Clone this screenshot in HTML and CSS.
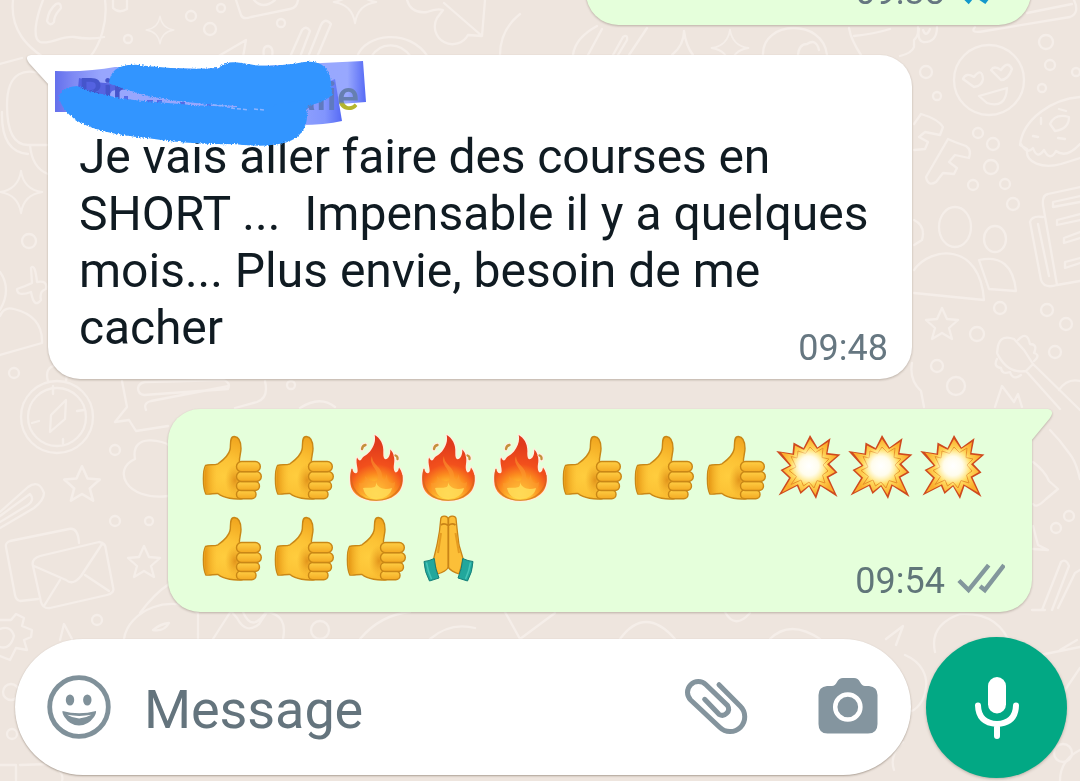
FILE: index.html
```html
<!DOCTYPE html>
<html lang="fr">
<head>
<meta charset="utf-8">
<title>Discussion</title>
<link rel="stylesheet" href="styles.css">
</head>
<body>
<svg class="defs" width="0" height="0" aria-hidden="true">
  <defs>
    <radialGradient id="skin" gradientUnits="userSpaceOnUse" cx="27" cy="44" r="40">
      <stop offset="0" stop-color="#ffcd3e"/><stop offset=".45" stop-color="#fcc235"/><stop offset="1" stop-color="#f0a51e"/>
    </radialGradient>
    <linearGradient id="wrist" x1="0" y1="0" x2="1" y2="0">
      <stop offset="0" stop-color="#e39312"/><stop offset="1" stop-color="#f8b92d" stop-opacity="0"/>
    </linearGradient>
    <linearGradient id="finger" x1="0" y1="0" x2="0" y2="1">
      <stop offset="0" stop-color="#ffcf45"/><stop offset="1" stop-color="#f3a922"/>
    </linearGradient>
    <radialGradient id="palm"><stop offset="0" stop-color="#d98412" stop-opacity=".75"/><stop offset="1" stop-color="#e89a1c" stop-opacity="0"/></radialGradient>
    <radialGradient id="fire" gradientUnits="userSpaceOnUse" cx="35" cy="62" r="50">
      <stop offset="0" stop-color="#ffe95c"/><stop offset=".2" stop-color="#ffc433"/><stop offset=".4" stop-color="#fb8a1e"/><stop offset=".6" stop-color="#f2501c"/><stop offset="1" stop-color="#e03a1c"/>
    </radialGradient>
    <radialGradient id="boom" gradientUnits="userSpaceOnUse" cx="36" cy="35" r="28">
      <stop offset="0" stop-color="#fff"/><stop offset=".25" stop-color="#fffbe0"/><stop offset=".6" stop-color="#ffdc60"/><stop offset="1" stop-color="#fbae2c"/>
    </radialGradient>
    <radialGradient id="glow"><stop offset="0" stop-color="#fff"/><stop offset=".5" stop-color="#fffdf0" stop-opacity=".9"/><stop offset="1" stop-color="#fff3a8" stop-opacity="0"/></radialGradient>
    <symbol id="thumb" viewBox="0 0 72 72">
      <g stroke="#c98716" stroke-width="1.4" stroke-linejoin="round">
        <path fill="url(#skin)" d="M8.500 33.500C12 32 17 33.500 21 31.800C25 29 32 23 33.200 17C33.800 12 32.500 4.600 37.300 4.500C42 5 44 10 44 16.500C44 22 42 25 42.500 30L48 40L45 66.800C38 67.500 27 66.500 21 61.500C17 61 13 62.800 8.800 62C5.500 55 5.800 38 8.500 33.500Z"/>
        <path fill="url(#wrist)" stroke="none" d="M9 34.300L20 33L20 61L9.300 61.300C6.500 54 7 39 9 34.300Z"/>
        <ellipse cx="38" cy="48" rx="10" ry="16" fill="url(#palm)" stroke="none"/>
        <g fill="url(#finger)">
          <rect x="39.500" y="58" width="19.500" height="8.800" rx="4.200"/>
          <rect x="39.500" y="49.500" width="23" height="9" rx="4.400"/>
          <rect x="39.500" y="39.500" width="24.800" height="10" rx="5"/>
          <rect x="39.500" y="29.500" width="23.800" height="10.300" rx="5"/>
        </g>
      </g>
    </symbol>
    <symbol id="flame" viewBox="0 0 72 72">
      <path fill="url(#fire)" stroke="#ffeede" stroke-width="2.500" stroke-linejoin="round" paint-order="stroke" d="M33.700 3C39 6 43 12 42.300 21C42.200 25 43 27 44.500 27.300C48 27 49.500 22 49.300 17.500C53 21 54 27 53 32C52.300 36 53 40 55 40.500C57 40 57.500 38 58 35.500C61 39 62 44 61.700 49C61 61 51 68.700 35.300 68.700C20 68.700 9.500 61 9.300 49.700C9 43 9.500 40 11 36.300C12 40 13 41.500 15.200 41.300C19 40 14 32 16 25.500C17.500 28 18.500 29 20 28C22 24 25.500 23.500 29 19.500C33 14 35 9 33.700 3Z"/>
      <path fill="none" stroke="#c9661c" stroke-opacity=".6" stroke-width="1.300" d="M11 37C7 58 19 68.300 35.300 68.300C51 68.300 62 58 61 43"/>
      <path fill="#fb9a30" opacity=".55" d="M31 24C27 33 37 36 37 46C36 51 29 50 24 44C25 49 24 52 18 51C18 60 24 66 35 66C48 66 54 59 54 50C50 53 46 50 46 42C44 48 43 49 41 45C42 35 31 33 31 24Z"/>
      <path fill="#ffe760" opacity=".7" d="M35 50C36 58 29 55 22 56C24 64 28 66.500 35 66.500C45 66.500 50 62 51 56C44 58 37 57 35 50Z"/>
      <path d="M21 17.500Q21 13.500 24.500 12.800M55 23.500Q57.500 24.500 56.500 27.500" fill="none" stroke="#ffeede" stroke-width="4.500" stroke-linecap="round"/>
      <path d="M21 17Q21.500 13.500 24.500 13M54.500 23.500Q57 24.500 56.500 27" fill="none" stroke="#c4913a" stroke-width="2.300" stroke-linecap="round"/>
    </symbol>
    <symbol id="burst" viewBox="0 0 72 72">
      <path fill="#cf4a1e" d="M3.200 19L19.500 21.500L20.500 10.500L30.500 16L37 3L44.500 15.500L57.500 6L54.500 21L67.500 22.500L56.500 32L64.500 40.500L55.500 45.500L64.500 65L47.500 54L43 67L36 54.500L27.500 62L24 54L5.500 63.500L16 46L7.500 38L16.500 33.500Z"/>
      <path fill="url(#boom)" d="M8 20.500L21 23L22 13.500L31 18L37 7L44 17L55 10L53 22.500L64 23.800L54 32.200L62 40L53.500 44.800L61 60.500L46.500 52.200L42.500 63L36.200 53L28 59.500L25 52.200L9 60.500L18 45.800L10 38.200L18.500 33.800Z"/>
      <path fill="none" stroke="#e8912a" stroke-width="1" d="M18 24.500L24 26L25 19L32.500 21.500L37 15L42.500 20.500L50 16L49 25.500L56 27L50 33L55 39L49.500 43L52 51L44 48.500L41 56L36 50L30.500 54L28 48L18 52.500L23.500 44.500L16 38.500L23 35Z"/>
      <circle cx="36" cy="34" r="19" fill="url(#glow)"/>
    </symbol>
    <symbol id="pray" viewBox="0 0 72 72">
      <g stroke="#c98417" stroke-width="1.300" stroke-linejoin="round">
        <path fill="#fcbf38" d="M35.300 6C34.500 2.500 28.500 2 27.800 5.500L26.500 18L24 32L20.500 46.500L24.500 61C28 60 33 58 35.300 54.500C38 58 43 60 46 61L50.300 46.500L46 32L44.300 18L43 5.500C42 2 36 2.500 35.300 6Z"/>
        <path fill="none" stroke-width="1.800" d="M35.300 6V55M28 12Q31 9.500 35.300 12.500Q39 9.500 42.500 12"/>
        <path fill="none" stroke="#e49b20" stroke-width="2" d="M28 20L25 40M42.500 20L46 40"/>
      </g>
      <path fill="#22a79c" stroke="#147f79" stroke-width="1" stroke-linejoin="round" d="M11 48.500Q16 48 21.300 45.500Q22 56 26 65L16.500 68Q11.500 59 11 48.500ZM60 48.500Q55 48 49.700 45.500Q49 56 45 65L54.500 68Q59.500 59 60 48.500Z"/>
      <path stroke="#45c4b7" stroke-width="1.600" fill="none" d="M13.500 49.500Q15 59 18.500 66M57.500 49.500Q56 59 52.500 66"/>
    </symbol>
    <symbol id="star" viewBox="-18 -18 36 36"><path d="M0-16L5-5L16-4L7 4L10 15L0 9L-10 15L-7 4L-16-4L-5-5Z"/></symbol>
    <symbol id="spark" viewBox="-26 -26 52 52"><path d="M0-24Q3-3 24 0Q3 3 0 24Q-3 3-24 0Q-3-3 0-24Z"/></symbol>
    <filter id="rough" x="-10%" y="-10%" width="120%" height="120%">
      <feTurbulence type="fractalNoise" baseFrequency=".7" numOctaves="2" seed="4"/>
      <feDisplacementMap in="SourceGraphic" scale="3.500" xChannelSelector="R" yChannelSelector="G"/>
    </filter>
    <linearGradient id="veil" x1="0" x2="1" y1="0" y2="0">
      <stop offset="0" stop-color="#6470ec"/><stop offset=".06" stop-color="#7f8af4"/><stop offset=".15" stop-color="#98a6fd"/><stop offset=".94" stop-color="#98a8fe"/><stop offset="1" stop-color="#566af5"/>
    </linearGradient>
    <linearGradient id="lowerVeil" x1="0" x2="1" y1="0" y2="0">
      <stop offset="0" stop-color="#98a8fe"/><stop offset=".7" stop-color="#8195fd"/><stop offset="1" stop-color="#566af5"/>
    </linearGradient>
    <linearGradient id="olive" gradientUnits="userSpaceOnUse" x1="0" x2="0" y1="102" y2="104">
      <stop offset="0" stop-color="#667fb0"/><stop offset="1" stop-color="#b5b62e"/>
    </linearGradient>
  </defs>
</svg>

<main class="chat">
  <svg class="wallpaper" viewBox="0 0 1080 781" aria-hidden="true">
    <g>
      <path d="M13 0C10 28 24 48 58 66M105 0C108 22 100 45 90 57M43 0C36 18 32 38 40 42C50 45 60 36 74 37Q90 40 104 37M56 4C51 8 48 14 47 21Q50 27 54 22C54 15 58 12 61 8Q61 2 56 4M0 64L22 58M113 0V8Q119 14 127 9V0"/>
      <path d="M236 0L241 15Q243 20 251 17L290 9Q297 8 298 0M254 0Q263 10 275 0M217 57L246 40L243 57M264 57Q262 46 268 46Q274 47 272 57M290 57L302 30Q306 25 310 31L300 57M308 57L321 25Q325 17 331 24L317 57M357 57C365 33 410 28 428 57M371 57C380 42 400 41 411 57"/>
      <path d="M407 0Q411 14 427 12Q437 8 443 10L437 18A16 16 0 1 0 468 35L482 36L485 0M444 3L482 36M500 55Q500 30 520 14M573 55Q575 38 597 26M588 55L602 29M613 55L623 37Q628 34 627 40L618 55M629 55L647 28M672 55Q684 45 684 31Q686 46 693 55M763 55C762 20 823 18 827 55M798 55Q799 44 807 44Q816 38 819 50M849 28Q851 40 861 55M854 36Q874 34 890 29M900 56Q912 53 914 47V40Q919 36 918 27M937 27Q937 43 923 42Q917 40 919 29M930 29Q926 38 923 30M975 27Q969 34 985 31L1070 17Q1080 13 1074 0M1027 13L1072 4"/>
      <circle cx="989" cy="80" r="35"/><path d="M963 79Q966 72 974 77Q982 67 983 79Q982 86 974 87ZM991 70Q994 65 1001 70Q1008 60 1012 69Q1008 80 1001 80ZM979 96L1007 88Q1006 109 987 103Z"/>
      <path d="M1080 97C1052 99 1023 119 1020 145L1027 149C1025 163 1043 169 1061 164L1080 158M1021 144Q1027 155 1033 148Q1037 160 1044 150Q1050 162 1056 151Q1066 159 1080 144M1050 124Q1055 113 1069 117Q1069 129 1055 131ZM1041 118V124M1033 136L1038 137M1059 109L1066 111M1058 138L1065 139"/>
      <path d="M914 124L921 114Q938 119 943 127L940 135L925 132L919 137L928 142L925 149L914 150M926 177L948 139Q954 142 966 146Q972 150 969 158L955 155L949 162L957 168L954 174L943 173L936 182Q928 187 926 177Z"/>
      <path d="M914 220Q926 226 922 240L914 245M914 270C931 246 980 242 984 300L914 293M979 260Q1012 253 1016 291L989 289Z"/><ellipse cx="955" cy="227" rx="16" ry="20"/><ellipse cx="995" cy="239" rx="11" ry="13"/>
      <path d="M1080 187L1048 194Q1042 195 1043 205L1057 285L1080 281M1043 217Q1032 215 1030 222L1041 280Q1044 289 1057 285M1038 224L1049 276M1080 196L1053 202V207L1080 202M1080 214L1057 220V225L1080 220M1080 232L1064 238V243L1080 238M1080 258L1065 262V268L1080 263"/>
      <path d="M998 346Q1001 334 1014 339L1024 350L1033 364L1026 371Q1007 374 997 353ZM1033 364L1080 410M1026 371L1060 409M1018 340Q1027 330 1030 344Q1038 344 1034 353Q1041 355 1034 361M997 359Q993 367 1001 368Q1002 375 1010 372Q1013 381 1021 375M995 407L1002 386L1014 402L1018 394L1022 407M1059 390Q1067 378 1080 381M912 363Q909 380 921 391L924 407"/>
      <path d="M47 76C25 66 7 72 7 105Q7 145 28 145H47M2 112Q1 152 28 154M30 145Q32 168 48 174M0 272Q12 289 0 310M0 316Q4 306 14 309Q43 316 42 343L0 355M31 268Q35 263 37 282Q48 280 46 289Q39 291 41 300Q34 309 31 292Q17 297 17 289Q26 286 32 283Z"/>
      <circle cx="57" cy="417" r="36"/><circle cx="57" cy="417" r="29"/><path d="M66 400L65 419L50 432L51 415ZM53 386V394M77 411L84 410M32 423L39 421M63 439V444M48 381Q44 367 57 365Q69 367 66 381"/>
      <path d="M122 381L127 407L115 422L129 420L136 431L168 426M138 388Q139 383 145 382L224 380Q231 383 228 389L144 395Q138 394 138 388M146 410Q143 403 151 401L229 386M265 381Q269 398 257 402L235 408M300 408Q320 395 335 407M168 496C125 501 112 469 135 459C130 431 167 442 168 445"/>
      <path d="M0 512L28 487Q39 479 44 493Q44 500 34 508L0 528M0 522L28 505Q35 500 30 494L0 516M38 599L20 601Q16 600 15 595L6 547Q5 543 10 541L69 529Q78 527 79 543M33 566Q31 559 40 556L99 542Q106 543 106 550L113 587Q115 593 107 595L50 608Q43 609 41 602ZM34 566L66 580Q73 586 81 576L102 544M44 606L60 580M85 575L109 591"/>
      <path d="M0 620L11 620L16 614L24 618L22 626L32 630L31 637L24 640L27 650L16 648L10 660L0 656M0 629Q11 625 14 636Q10 650 0 647M60 640L64 624L72 639M124 639C128 610 173 592 198 613V639M140 613Q154 594 169 584M153 630Q160 624 169 623Q164 632 153 630M213 639L231 611L237 618Q246 635 259 624L267 612Q288 615 283 639M243 612Q252 633 266 612M360 639Q380 615 410 612M430 639Q450 622 475 628M505 612L520 639L555 613M620 639Q645 605 675 639M725 612Q735 630 750 613M770 639Q790 619 820 639"/>
      <path d="M1033 462Q1045 471 1049 481L1058 489L1046 499Q1036 509 1033 504M1050 430Q1060 440 1069 453Q1076 461 1080 479M1033 526L1038 545L1048 550L1033 549M1042 610L1061 562Q1066 558 1069 566L1052 610M1058 608L1075 573L1080 570M1032 610H1045M886 639L903 626L896 645M935 652Q929 625 960 614Q1000 612 1011 647M1060 650L1077 640M1040 655L1080 647M1065 690L1080 668M905 655C940 670 925 710 908 712M894 770Q889 755 903 742M0 765H16V781M20 765L50 764Q65 772 62 781M1060 781Q1060 760 1080 750"/>
      <g><circle cx="191" cy="16" r="5"/><circle cx="221" cy="8" r="4"/><circle cx="210" cy="29" r="6"/><circle cx="128" cy="39" r="4"/><circle cx="281" cy="23" r="4"/><circle cx="926" cy="72" r="6"/><circle cx="937" cy="96" r="4"/><circle cx="1046" cy="42" r="7"/><circle cx="1050" cy="65" r="5"/><circle cx="1042" cy="88" r="4"/><circle cx="1076" cy="72" r="4"/><circle cx="978" cy="133" r="5"/><circle cx="993" cy="144" r="6"/><circle cx="991" cy="167" r="7"/><circle cx="973" cy="185" r="5"/><circle cx="1005" cy="184" r="5"/><circle cx="1013" cy="204" r="6"/><circle cx="1000" cy="308" r="6"/><circle cx="1047" cy="310" r="6"/><circle cx="1066" cy="324" r="6"/><circle cx="977" cy="334" r="7"/><circle cx="937" cy="366" r="6"/><circle cx="956" cy="386" r="9"/><circle cx="1055" cy="352" r="6"/><circle cx="29" cy="241" r="7"/><circle cx="14" cy="373" r="5"/><circle cx="115" cy="450" r="5"/><circle cx="115" cy="521" r="5"/><circle cx="149" cy="521" r="4"/><circle cx="97" cy="620" r="5"/><circle cx="320" cy="630" r="9"/><circle cx="291" cy="385" r="4"/><circle cx="1069" cy="516" r="5"/><circle cx="1056" cy="528" r="5"/><circle cx="1063" cy="753" r="9"/><circle cx="11" cy="692" r="8"/><circle cx="12" cy="734" r="5"/></g>
      <use href="#spark" x="145" y="15" width="30" height="30"/><use href="#spark" x="332" y="-22" width="46" height="48"/><use href="#spark" x="-2" y="167" width="46" height="50"/><use href="#spark" x="710" y="26" width="40" height="44"/>
      <use href="#star" x="62" y="464" width="40" height="40"/><use href="#star" x="126" y="544" width="36" height="36"/><use href="#star" x="924" y="306" width="36" height="36"/>
    </g>
  </svg>

  <section class="bubble sent previous">
    <div class="meta"><span>09:38</span>
      <svg class="checks read" viewBox="0 0 50 34"><path d="M2 18L12 28L33 2M23 24L29 28L49 2"/></svg>
    </div>
  </section>

  <section class="bubble received">
    <svg class="tail tail-left" viewBox="0 0 24 38"><path d="M24 0H5Q-2 1 3 8L23 30L24 38Z"/></svg>
    <svg class="redaction" viewBox="48 55 330 95">
      <path fill="url(#veil)" d="M55 71Q90 72 115 67L200 69L363 61L366 102L340 104L305 104L280 111L70 112H55Z"/>
      <path fill="url(#lowerVeil)" d="M285 100L335 79L342 121Q325 125 300 125Z"/>
      <path fill="#4a58dc" opacity=".85" d="M79 78Q100 84 112 83L122 88L112 91L107 98L78 88Z"/>
      <g class="sender"><text class="faded" x="79" y="106">Bir</text><text x="294" y="110"><tspan fill="#5f7ac0">ali</tspan><tspan fill="url(#olive)">e</tspan></text></g>
      <path fill="#3b50dc" opacity=".7" d="M124 96h4v5h-4zM147 100h6v3h-6zM157 100h5v3h-5zM180 102h5v4h-5zM207 104h4v3h-4z"/>
      <g fill="#3395ff" filter="url(#rough)">
        <path d="M109 84C110 68 122 62 147 66Q182 70 219 68Q224 60 242 63Q268 69 304 62Q329 59 331 83L332 95Q326 101 309 106L302 115H237V106Q177 103 144 95Z"/>
        <path d="M59 98Q60 87 77 86Q102 97 144 101L192 105L254 108L304 100Q311 119 302 132C293 145 268 148 234 144Q190 145 147 138C105 134 67 126 59 98Z"/>
      </g>
      <path d="M213 105l14 1m4 2l18 2m5-1l10 1" fill="none" stroke="#8eb4ff" stroke-width="1.500" stroke-dasharray="4 2"/>
    </svg>
    <p class="message"><span class="tight">Je vais aller faire des courses en</span><span class="wide">SHORT ...&nbsp; Impensable il y a quelques</span><span>mois... Plus envie, besoin de me</span><span class="tight">cacher</span></p>
    <div class="meta"><span>09:48</span></div>
  </section>

  <section class="bubble sent reactions">
    <svg class="tail tail-right" viewBox="0 0 24 38"><path d="M0 0H18Q25 2 20 9L1 32L0 38Z"/></svg>
    <div class="emojis">
      <svg><use href="#thumb"/></svg><svg><use href="#thumb"/></svg><svg><use href="#flame"/></svg><svg><use href="#flame"/></svg><svg><use href="#flame"/></svg><svg><use href="#thumb"/></svg><svg><use href="#thumb"/></svg><svg><use href="#thumb"/></svg><svg><use href="#burst"/></svg><svg><use href="#burst"/></svg><svg><use href="#burst"/></svg>
      <svg><use href="#thumb"/></svg><svg><use href="#thumb"/></svg><svg><use href="#thumb"/></svg><svg><use href="#pray"/></svg>
    </div>
    <div class="meta"><span>09:54</span>
      <svg class="checks" viewBox="0 0 50 34"><path d="M2 18L12 28L33 2M24 24L29 28L49 2"/></svg>
    </div>
  </section>

  <footer class="composer">
    <div class="field">
      <svg class="smile" viewBox="0 0 64 64"><circle cx="32" cy="32" r="29.300" fill="none" stroke="#80919a" stroke-width="4.800"/><ellipse cx="23" cy="25" rx="4.200" ry="5.600"/><ellipse cx="40.300" cy="25" rx="4.200" ry="5.600"/><path fill-rule="evenodd" d="M15.500 36Q32 40.500 49 36Q49.500 38 47 42Q41 50.500 32 50.500Q23 50.500 17.500 42Q15 38 15.500 36ZM20 39.800Q32 47 44.500 39.800Q32 42 20 39.800Z"/></svg>
      <span class="placeholder">Message</span>
      <svg class="clip" viewBox="70 147 195 174"><path d="M175 167L239 232A44 44 0 0 1 177 295L90 213A32 32 0 0 1 136 167L201 230A19 19 0 0 1 175 256L132 211"/></svg>
      <svg class="camera" viewBox="0 0 60 56"><path d="M9 8H14Q17 8 19 4Q21 0 25 0H36Q40 0 42 4Q44 8 47 8H51Q59.500 9 59.500 17V46Q59.500 55.500 50 55.500H9.500Q.5 55.500.5 46V17Q.5 9 9 8Z"/><circle cx="29.800" cy="29" r="12.600"/></svg>
    </div>
    <div class="mic"><svg viewBox="0 0 46 64"><rect x="14" y="1" width="18" height="36.500" rx="9"/><path d="M4 29.500Q4.500 47 23 48Q41.500 47 42 29.500M23 48V60"/></svg></div>
  </footer>
</main>
</body>
</html>
```

FILE: styles.css
```css
* { box-sizing: border-box; }
html, body { margin: 0; height: 781px; overflow: hidden; }
body { font-family: Roboto, "Liberation Sans", sans-serif; background: #eee5de; }
svg { display: block; flex: none; }
.defs { position: absolute; }
.chat { position: relative; width: 1080px; height: 781px; display: flex; flex-direction: column; overflow: hidden; isolation: isolate; }
.wallpaper { position: absolute; inset: 0; z-index: -1; width: 1080px; height: 781px; fill: none; stroke: #f5eee9; stroke-width: 2.3; stroke-linejoin: round; stroke-linecap: round; }
.bubble { position: relative; flex: none; border-radius: 32px; filter: drop-shadow(0 1px 1px rgba(90, 75, 60, .35)); }
.sent { background: #e5ffdb; }
.previous { width: 445px; height: 65px; margin: -40px 0 0 586px; border-radius: 42px; }
.previous .meta { right: 26px; bottom: 12px; }
.received { width: 864px; height: 324px; margin: 30px 0 0 48px; padding: 73px 24px 0 31px; background: #fff; border-top-left-radius: 0; }
.reactions { width: 864px; height: 203px; margin: 30px 0 0 168px; padding: 23px 0 0 29px; border-top-right-radius: 0; }
.tail { position: absolute; width: 24px; height: 38px; top: 0; }
.tail-left { left: -22px; fill: #fff; }
.tail-right { right: -22px; fill: #e5ffdb; }
.redaction { position: absolute; left: 0; top: 0; width: 330px; height: 95px; }
.sender { font-size: 41px; font-weight: 500; }
.sender .faded { fill: #4555cc; font-size: 38px; }
.message { margin: 0; font-size: 48px; line-height: 57px; color: #101b22; }
.message span { display: block; white-space: nowrap; }
.message .tight { letter-spacing: -.12px; }
.message .wide { letter-spacing: .03px; }
.meta { position: absolute; right: 24px; bottom: 10px; display: flex; align-items: center; gap: 12px; font-size: 36px; line-height: 42px; color: #667781; }
.reactions .meta { right: 27px; color: #607679; }
.checks { width: 48px; height: 33px; margin-top: -3px; fill: none; stroke: #83979c; stroke-width: 4.6; }
.checks.read { stroke: #1398cb; }
.emojis { display: grid; grid-template-columns: repeat(11, 72px); grid-auto-rows: 72px; row-gap: 9px; }
.emojis svg { width: 72px; height: 72px; }
.composer { display: flex; flex: none; margin: 25px 0 0 15px; gap: 15px; align-items: center; height: 141px; }
.field { display: flex; align-items: center; width: 896px; height: 136px; margin-top: -1px; padding: 0 33px 0 32px; border-radius: 68px; background: #fff; box-shadow: 0 1px 2px rgba(90, 75, 60, .45); }
.smile { width: 64px; height: 64px; fill: #80919a; }
.placeholder { margin: 5px 0 0 33px; flex: 1; font-size: 54px; line-height: 64px; letter-spacing: -.1px; color: #64747d; }
.clip { width: 65px; height: 58px; fill: none; stroke: #84949d; stroke-width: 15; stroke-linecap: round; }
.camera { width: 60px; height: 56px; margin: 0 0 3px 69px; fill: #84959f; }
.camera circle { stroke: #fff; stroke-width: 4.5; }
.mic { flex: none; width: 141px; height: 141px; border-radius: 50%; background: #02a884; display: grid; place-items: center; box-shadow: 0 1px 3px rgba(90, 75, 60, .35); }
.mic svg { width: 46px; height: 64px; fill: #fff; }
.mic path { fill: none; stroke: #fff; stroke-width: 6; stroke-linecap: round; }
```
